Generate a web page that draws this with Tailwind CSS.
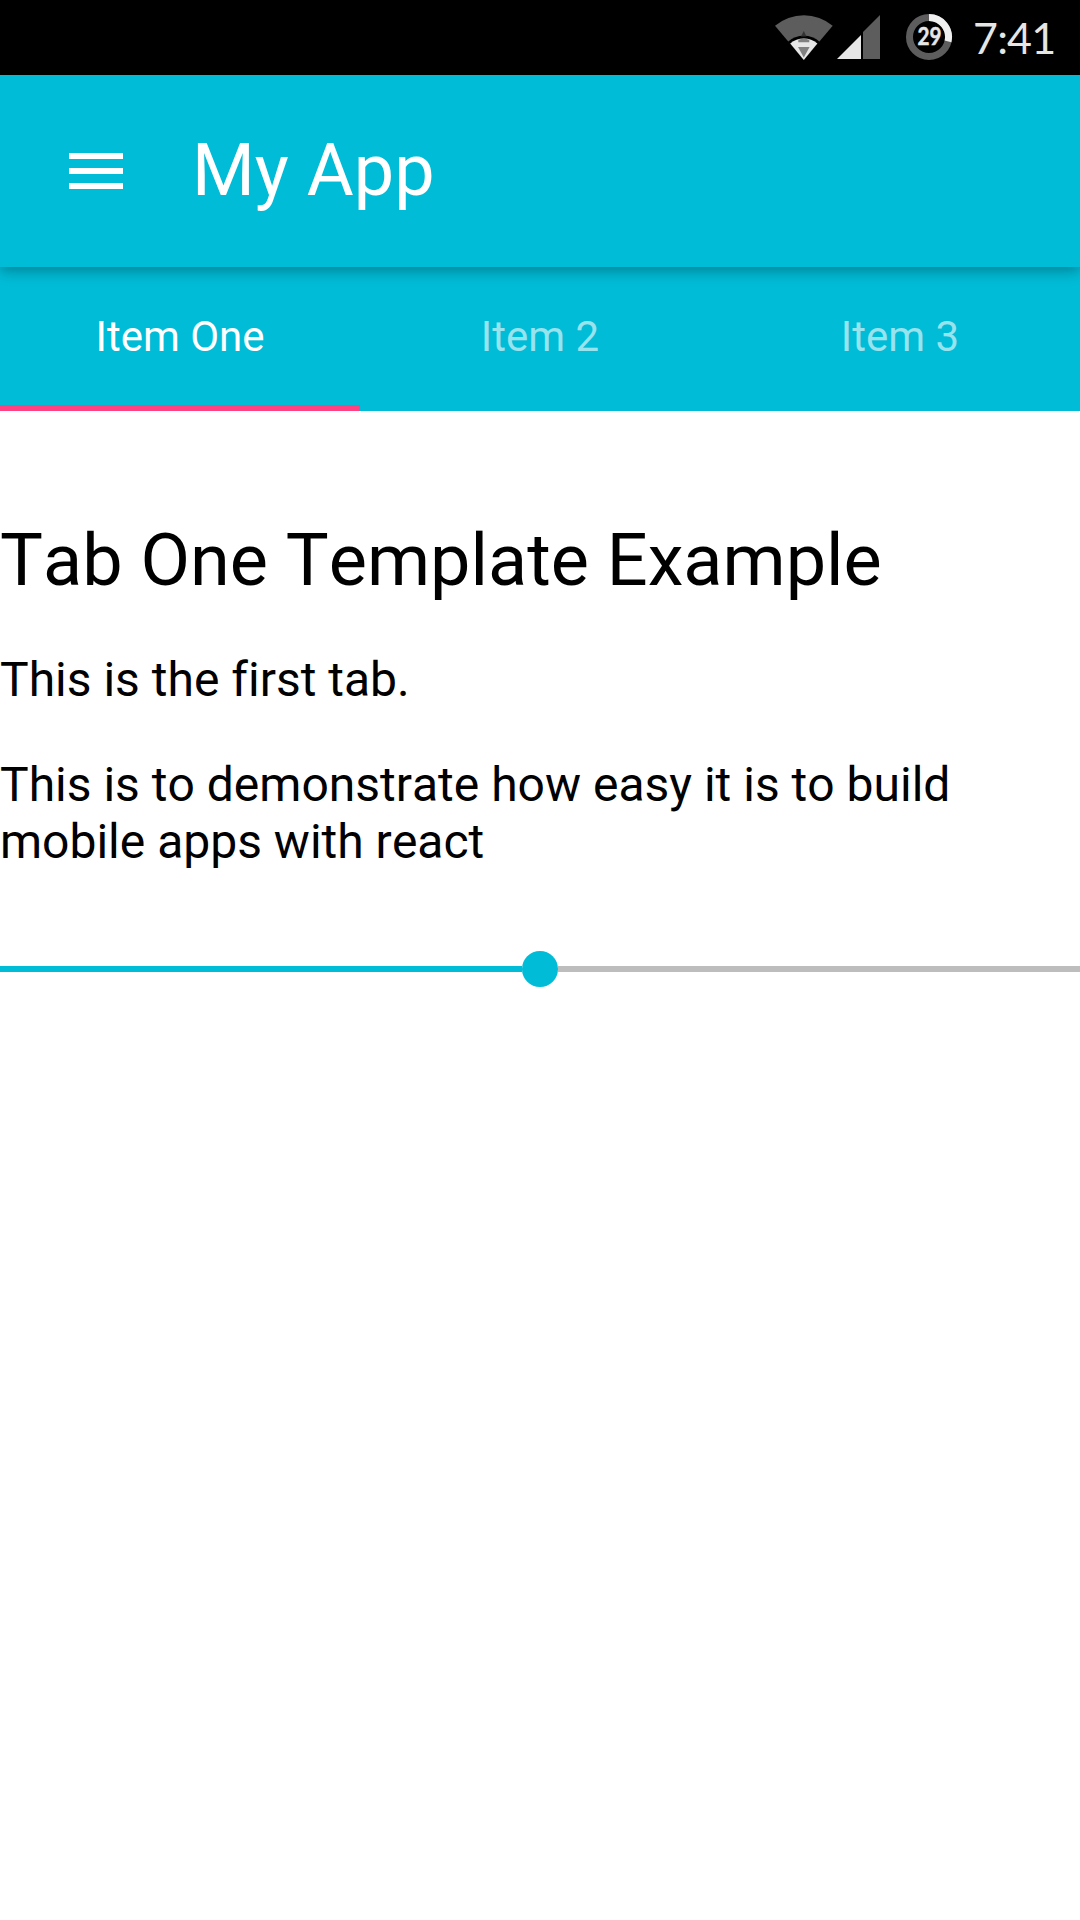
<!DOCTYPE html>
<html lang="en">
<head>
<meta charset="utf-8">
<title>My App</title>
<script src="https://cdn.jsdelivr.net/npm/@tailwindcss/browser@4"></script>
</head>
<body class="h-[1920px] w-[1080px] overflow-hidden bg-white font-['Roboto',sans-serif] text-black [font-kerning:none] [font-variant-ligatures:none]">
  <!-- status bar -->
  <div class="flex h-[75px] items-start bg-black pl-[775px]">
    <svg class="mt-[14px] h-[47px] w-[58px] shrink-0" viewBox="775 14 58 47">
      <path d="M803.8 60L775 25.8A45 45 0 0 1 832.7 25.8Z" fill="#5d5d5d"/>
      <path d="M803.8 60L788 41.8A24 24 0 0 1 819.6 41.8Z" fill="#000"/>
      <path d="M803.8 60L790.2 43.5A21.3 21.3 0 0 1 817.4 43.5Z" fill="#e6e6e6"/>
      <path d="M803.8 31L806.5 36.5H801Z" fill="#333"/>
      <path d="M798.3 39.7Q803.8 38 809.3 39.7V42.3H798.3ZM798 47H809.6L803.8 57.5Z" fill="#808080"/>
    </svg>
    <svg class="mt-[14px] ml-1 h-[47px] w-[44px] shrink-0" viewBox="837 14 44 47">
      <path d="M837 59L861 35V59Z" fill="#e6e6e6"/>
      <path d="M863 59V32L880 15V59Z" fill="#5d5d5d"/>
    </svg>
    <svg class="mt-[13px] ml-[24px] h-[48px] w-[48px] shrink-0" viewBox="905 13 48 48">
      <circle cx="929" cy="37" r="19.5" fill="none" stroke="#5d5d5d" stroke-width="7"/>
      <path d="M929 17.5A19.5 19.5 0 0 1 948 41.4" fill="none" stroke="#f0f0f0" stroke-width="7"/>
      <text x="929.5" y="45" text-anchor="middle" font-family="Lato" font-weight="700" font-size="24" textLength="24" lengthAdjust="spacingAndGlyphs" fill="#e6e6e6" stroke="#e6e6e6" stroke-width="0.5">29</text>
    </svg>
    <div class="mt-[12px] ml-[20px] font-['Lato',sans-serif] text-[43px] leading-[52px] tracking-[-0.8px] text-[#e6e6e6] [font-kerning:normal]">7:41</div>
  </div>

  <!-- app bar -->
  <header class="relative z-10 flex h-[192px] items-center bg-[#00bcd7] pl-[69px] text-white shadow-[0_3px_18px_rgba(0,0,0,0.12),0_3px_12px_rgba(0,0,0,0.24)]">
    <div class="flex w-[54px] flex-col gap-[9px]">
      <div class="h-[6px] bg-white"></div>
      <div class="h-[6px] bg-white"></div>
      <div class="h-[6px] bg-white"></div>
    </div>
    <h1 class="ml-[69px] text-[72px] leading-[192px]">My App</h1>
  </header>

  <!-- tabs -->
  <nav class="grid h-[144px] grid-cols-3 bg-[#00bcd7] text-center text-[42px] leading-[138px] text-white">
    <div class="flex flex-col border-b-[6px] border-[#ff4081] pt-px leading-[137px]">Item One</div>
    <div class="pt-px text-white/60">Item 2</div>
    <div class="pt-px text-white/60">Item 3</div>
  </nav>

  <main class="pt-[107px]">
    <h2 class="text-[72px] leading-[85px]">Tab One Template Example</h2>
    <p class="mt-12 text-[48px] leading-[57px]">This is the first tab.</p>
    <p class="mt-12 text-[48px] leading-[57px]">This is to demonstrate how easy it is to build mobile apps with react</p>
    <!-- slider -->
    <div class="mt-[81px] flex h-[36px] items-center">
      <div class="h-[6px] w-[522px] bg-[#00bcd7]"></div>
      <div class="size-[36px] rounded-full bg-[#00bcd7]"></div>
      <div class="h-[6px] flex-1 bg-[#bdbdbd]"></div>
    </div>
  </main>
</body>
</html>
